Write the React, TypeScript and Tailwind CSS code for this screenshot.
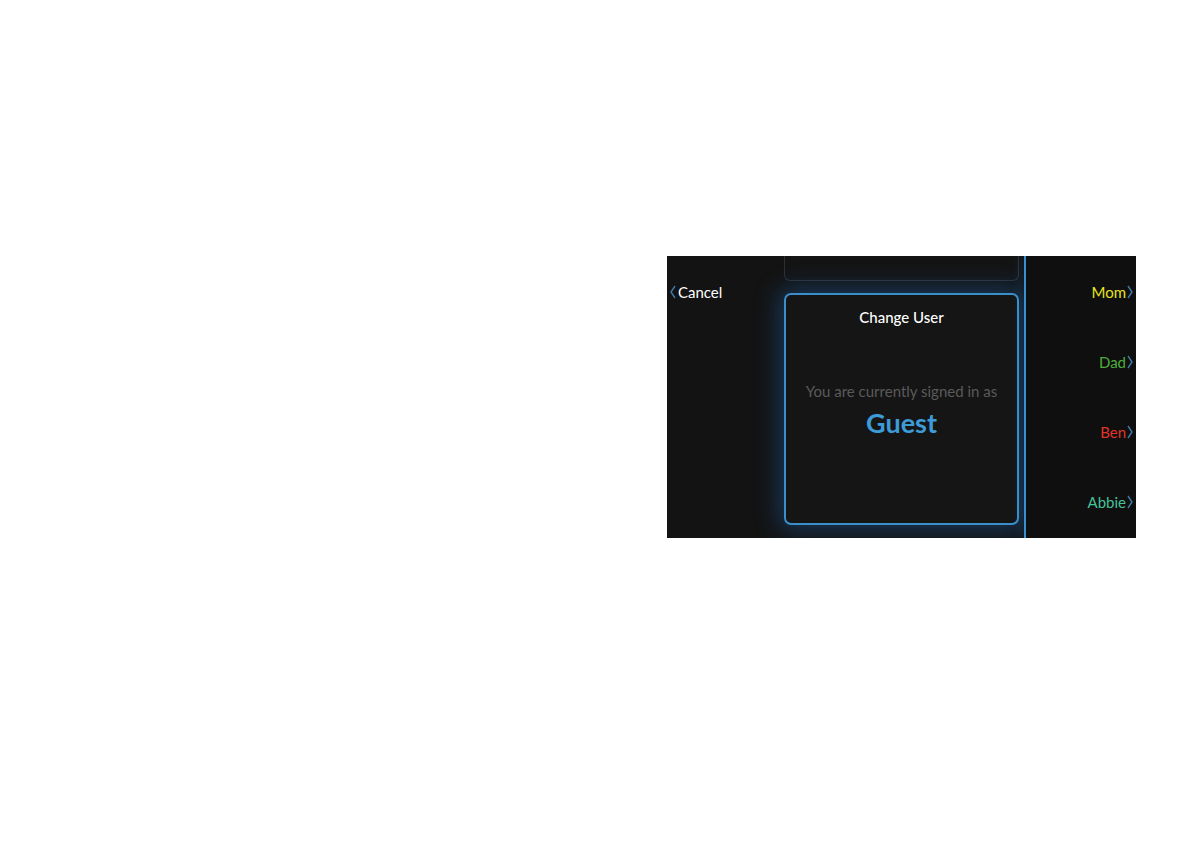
import React from "react";

const users = [
  { name: "Mom", color: "text-[#e8e41c]" },
  { name: "Dad", color: "text-[#4fae3a]" },
  { name: "Ben", color: "text-[#e0342a]" },
  { name: "Abbie", color: "text-[#46c19a]" },
];

function Chevron({ dir }: { dir: "left" | "right" }) {
  return (
    <svg width="6" height="14" viewBox="0 0 6 14" className="shrink-0">
      <path
        d={dir === "left" ? "M5 1 L1 7 L5 13" : "M1 1 L5 7 L1 13"}
        fill="none"
        stroke="#3f79a6"
        strokeWidth="1.4"
      />
    </svg>
  );
}

export default function App() {
  return (
    <div className="min-h-[841px] bg-white pt-[256px] pl-[667px] font-['Lato','Open_Sans',sans-serif]">
      <div className="flex h-[282px] w-[469px] overflow-hidden bg-[#131313]">
        {/* left side: cancel + user card */}
        <div className="flex w-[357px]">
          <div className="w-[117px] pl-[3px] pt-[27px]">
            <button className="flex items-center gap-[2px] text-[15px] leading-[18px] text-white">
              <Chevron dir="left" />
              Cancel
            </button>
          </div>
          <div className="flex w-[235px] flex-col gap-[12px]">
            <div className="h-[25px] rounded-b-[6px] border border-t-0 border-[#2b3138] bg-[#141414]" />
            <div className="flex h-[232px] flex-col items-center rounded-[7px] border-2 border-[#3a8fcb] bg-[#151515] shadow-[0_0_24px_5px_rgba(30,105,185,0.42)]">
              <div className="mt-[13px] text-[15px] font-medium leading-[18px] text-white">
                Change User
              </div>
              <div className="mt-[56px] text-[15px] leading-[18px] text-[#5a5a5a]">
                You are currently signed in as
              </div>
              <div className="mt-[7px] text-[27px] font-bold leading-[32px] text-[#3d9bd8]">
                Guest
              </div>
            </div>
          </div>
        </div>

        <div className="w-[2px] bg-[#3a8fd0] shadow-[-3px_0_10px_rgba(40,130,210,0.45)]" />

        {/* right side: user list */}
        <div className="flex flex-1 flex-col items-end gap-[52px] bg-[#0f0f0f] pr-[3px] pt-[27px]">
          {users.map((u) => (
            <button
              key={u.name}
              className={`flex h-[18px] items-center gap-[1px] text-[15px] leading-[18px] ${u.color}`}
            >
              {u.name}
              <Chevron dir="right" />
            </button>
          ))}
        </div>
      </div>
    </div>
  );
}
